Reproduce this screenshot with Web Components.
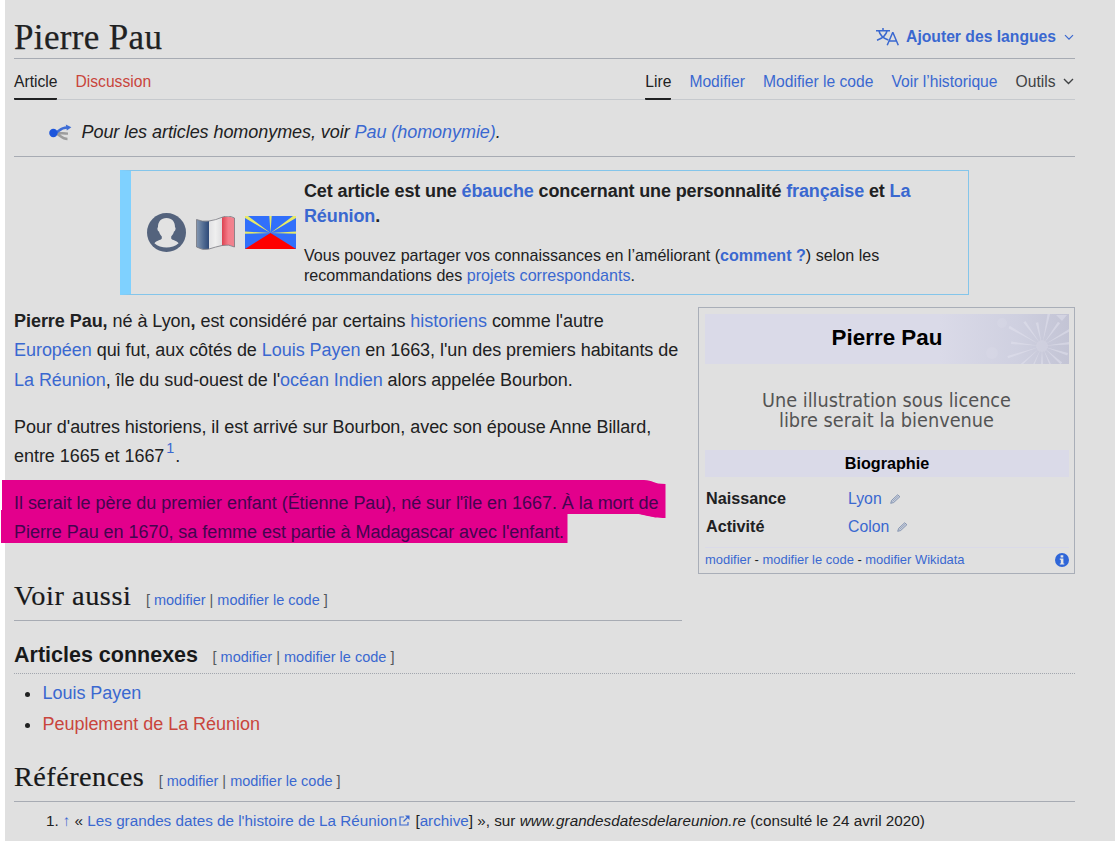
<!DOCTYPE html>
<html lang="fr">
<head>
<meta charset="utf-8">
<title>Pierre Pau</title>
<style>
    html, body
    {
        margin: 0;
        height: 100%;
        overflow: hidden;
        background: #fff;
    }

    body
    {
        font: 18px/29.25px "Liberation Sans", Arial, sans-serif;
        color: #202122;
        --link: #3a68d0;
        --red: #c9453c;
        --rule: #a7abb3;
    }

    a
    {
        color: var(--link);
        text-decoration: none;
    }

    a.new
    {
        color: var(--red);
    }

    p
    {
        margin: 0 0 18px;
        letter-spacing: -0.045px;
        white-space: nowrap;
    }

    sup
    {
        font-size: 14.4px;
        line-height: 0;
        vertical-align: 9px;
        margin: 0 1px 0 2px;
    }
</style>
</head>
<body>

<wk-page>
    <wk-titlebar title="Pierre Pau" langs="Ajouter des langues"></wk-titlebar>

    <wk-tabs>
        <wk-tab selected>Article</wk-tab>
        <wk-tab kind="new">Discussion</wk-tab>
        <wk-tab slot="views" selected>Lire</wk-tab>
        <wk-tab slot="views" kind="link">Modifier</wk-tab>
        <wk-tab slot="views" kind="link">Modifier le code</wk-tab>
        <wk-tab slot="views" kind="link">Voir l’historique</wk-tab>
        <wk-tab slot="views" kind="menu">Outils</wk-tab>
    </wk-tabs>

    <wk-hatnote>Pour les articles homonymes, voir <a>Pau (homonymie)</a>.</wk-hatnote>

    <wk-stub>
        <span slot="title">Cet article est une <a>ébauche</a> concernant une personnalité <a>française</a> et <a>La<br>Réunion</a>.</span>
        Vous pouvez partager vos connaissances en l’améliorant (<a><b>comment ?</b></a>) selon les<br>recommandations des <a>projets correspondants</a>.
    </wk-stub>

    <wk-columns>
        <p><b>Pierre Pau,</b> né à Lyon<b>,</b> est considéré par certains <a>historiens</a> comme l'autre<br>
        <a>Européen</a> qui fut, aux côtés de <a>Louis Payen</a> en 1663, l'un des premiers habitants de<br>
        <a>La Réunion</a>, île du sud-ouest de l'<a>océan Indien</a> alors appelée Bourbon.</p>

        <p>Pour d'autres historiens, il est arrivé sur Bourbon, avec son épouse Anne Billard,<br>
        entre 1665 et 1667<sup><a>1</a></sup>.</p>

        <wk-marked>Il serait le père du premier enfant (Étienne Pau), né sur l'île en 1667. À la mort de<br>
        Pierre Pau en 1670, sa femme est partie à Madagascar avec l'enfant.</wk-marked>

        <wk-heading style="margin-top: 29px">Voir aussi</wk-heading>

        <wk-infobox slot="aside" title="Pierre Pau" section="Biographie">
            <wk-fact label="Naissance">Lyon</wk-fact>
            <wk-fact label="Activité">Colon</wk-fact>
        </wk-infobox>
    </wk-columns>

    <wk-heading level="3">Articles connexes</wk-heading>

    <wk-list>
        <wk-item><a>Louis Payen</a></wk-item>
        <wk-item><a class="new">Peuplement de La Réunion</a></wk-item>
    </wk-list>

    <wk-heading style="margin-top: 16px; letter-spacing: 0.45px">Références</wk-heading>

    <wk-reference number="1." source="www.grandesdatesdelareunion.re" seen="(consulté le 24 avril 2020)">Les grandes dates de l'histoire de La Réunion</wk-reference>
</wk-page>

<script>
const links = `
    a
    {
        color: var(--link);
        text-decoration: none;
    }
`;

class WkElement extends HTMLElement
{
    connectedCallback()
    {
        if (!this.dom)
        {
            this.dom = this.attachShadow({mode: 'open'});
            this.dom.innerHTML = this.render();
        }
    }

    attr(name)
    {
        return this.getAttribute(name) || "";
    }
}

customElements.define("wk-page", class extends WkElement
{
    render()
    {
        return `
            <style>
                :host
                {
                    display: block;
                    box-sizing: border-box;
                    margin-left: 5px;
                    padding: 0 40px 0 9px;
                    height: 841px;
                    background: #e0e0e0;
                }
            </style>
            <slot></slot>`;
    }
});

customElements.define("wk-titlebar", class extends WkElement
{
    render()
    {
        return `
            <style>
                :host
                {
                    display: flex;
                    justify-content: space-between;
                    box-sizing: border-box;
                    height: 59px;
                    padding-top: 17px;
                    border-bottom: 1px solid var(--rule);
                }

                h1
                {
                    margin: 0;
                    font: 35px/42px "Liberation Serif", serif;
                    letter-spacing: 0.35px;
                    -webkit-text-stroke: 0.25px;
                }

                .langs
                {
                    display: flex;
                    align-items: center;
                    height: 40px;
                    font-size: 15.7px;
                    font-weight: bold;
                    color: var(--link);
                }

                .langs svg:first-child
                {
                    margin-right: 7px;
                }

                .langs svg:last-child
                {
                    margin: 0 1px 0 8px;
                }
            </style>
            <h1>${this.attr("title")}</h1>
            <div class="langs">
                <svg width="23" height="18" viewBox="0 0 23 18" fill="none" stroke="currentColor" stroke-width="1.5">
                    <path d="M0 2.7H14M7 0V2.7M3 3C4 7.5 8 10.5 12.4 12M11 3C10 7.5 6 10.5 1 12.2"/>
                    <path d="M11.2 17.2L16.6 4.8H17L22.3 17.2M13 13H20.6"/>
                </svg>
                <span>${this.attr("langs")}</span>
                <svg width="10" height="7" viewBox="0 0 10 7" fill="none" stroke="currentColor" stroke-width="1.2"><path d="M1 1.2L5 5.2L9 1.2"/></svg>
            </div>`;
    }
});

customElements.define("wk-tabs", class extends WkElement
{
    render()
    {
        return `
            <style>
                :host
                {
                    display: flex;
                    justify-content: space-between;
                    box-sizing: border-box;
                    height: 41px;
                    border-bottom: 1px solid #c6c9cd;
                }

                nav
                {
                    display: flex;
                    gap: 18px;
                }
            </style>
            <nav><slot></slot></nav>
            <nav><slot name="views"></slot></nav>`;
    }
});

customElements.define("wk-tab", class extends WkElement
{
    render()
    {
        let arrow = this.attr("kind") == "menu"
            ? `<svg width="11" height="7" viewBox="0 0 11 7" fill="none" stroke="currentColor" stroke-width="1.4"><path d="M1 1L5.5 5.5L10 1"/></svg>`
            : ``;

        return `
            <style>
                :host
                {
                    display: flex;
                    align-items: center;
                    gap: 7px;
                    box-sizing: border-box;
                    height: 41px;
                    padding-bottom: 1px;
                    border-bottom: 2px solid transparent;
                    font-size: 15.65px;
                    white-space: nowrap;
                }

                :host([selected])
                {
                    border-color: #202122;
                    border-radius: 0 0 1px 1px;
                }

                :host([kind=link])
                {
                    color: var(--link);
                }

                :host([kind=new])
                {
                    color: var(--red);
                }

                :host([kind=menu])
                {
                    color: #404244;
                    padding-right: 1.5px;
                }

                span
                {
                    padding-top: 7px;
                }

                svg
                {
                    margin-top: 6px;
                }
            </style>
            <span><slot></slot></span>${arrow}`;
    }
});

customElements.define("wk-hatnote", class extends WkElement
{
    render()
    {
        return `
            <style>
                :host
                {
                    display: flex;
                    align-items: center;
                    gap: 9.5px;
                    box-sizing: border-box;
                    height: 57px;
                    padding: 9px 0 0 35px;
                    border-bottom: 1px solid var(--rule);
                    font-style: italic;
                    letter-spacing: -0.06px;
                    white-space: nowrap;
                }
            </style>
            <svg width="23" height="17" viewBox="0 0 23 17" fill="none">
                <path d="M5 9C10 9 12 15 18.5 15M8 9.3C11 8.6 14 9.6 19 9.6" stroke="#9d9d9d" stroke-width="2.4"/>
                <path d="M5 9C10 9 10 3.5 18 3.5" stroke="#3f6ed6" stroke-width="2.5"/>
                <path d="M16.8 0.4L22.4 3.2L17.8 6.6Z" fill="#3f6ed6"/>
                <circle cx="4.4" cy="9" r="4.2" fill="#1d56dc"/>
            </svg>
            <div><slot></slot></div>`;
    }
});

customElements.define("wk-stub", class extends WkElement
{
    render()
    {
        return `
            <style>
                :host
                {
                    display: flex;
                    align-items: center;
                    box-sizing: border-box;
                    width: 849px;
                    height: 125px;
                    margin: 13px auto 12px;
                    border: 1px solid #84c5ea;
                    border-left: 11px solid #7fd1ff;
                }

                .icons
                {
                    display: flex;
                    align-items: center;
                    padding-left: 16px;
                    gap: 10px;
                    width: 157px;
                }

                .text
                {
                    padding-bottom: 1px;
                    font-size: 16.1px;
                    line-height: 20px;
                    white-space: nowrap;
                }

                .title
                {
                    font-size: 18px;
                    font-weight: bold;
                    letter-spacing: -0.125px;
                    line-height: 25px;
                    margin-bottom: 16px;
                }
            </style>
            <div class="icons">
                <svg width="39" height="39" viewBox="0 0 39 39">
                    <circle cx="19.5" cy="19.5" r="19.5" fill="#54637d"/>
                    <path d="M19.5 5C14 5 10.8 8.8 11 14.2C9.9 14.6 10.4 18 12 18.5C12.6 21 13.8 22.4 14.8 23.4V25.6C13.5 27.5 9.5 27.6 7.4 30.2Q12.5 34.5 19.5 34.5T31.6 30.2C29.5 27.6 25.5 27.5 24.2 25.6V23.4C25.2 22.4 26.4 21 27 18.5C28.6 18 29.1 14.6 28 14.2C28.2 8.8 25 5 19.5 5Z" fill="#e2e2e2"/>
                </svg>
                <svg width="39" height="34" viewBox="0 0 39 34">
                    <defs>
                        <linearGradient id="blue"><stop offset="0" stop-color="#8497b0"/><stop offset=".6" stop-color="#4d6890"/><stop offset="1" stop-color="#2f4a78"/></linearGradient>
                        <linearGradient id="white"><stop offset="0" stop-color="#e2e2e4"/><stop offset=".5" stop-color="#efefef"/><stop offset="1" stop-color="#dedee0"/></linearGradient>
                        <linearGradient id="rouge"><stop offset="0" stop-color="#dc4250"/><stop offset=".5" stop-color="#f57d8a"/><stop offset="1" stop-color="#f0838f"/></linearGradient>
                    </defs>
                    <path d="M0.5 3.5Q6 6 13 5V33Q6 34 0.5 31Z" fill="url(#blue)"/>
                    <path d="M13 5Q19 3 26 1.3V29.5Q19 31 13 33Z" fill="url(#white)"/>
                    <path d="M26 1.3Q32 0 38.5 2V31Q33 28 26 29.5Z" fill="url(#rouge)"/>
                    <path d="M0.5 3.5Q6 6 13 5T26 1.3T38.5 2V31Q33 28 26 29.5T13 33T0.5 31Z" fill="none" stroke="#77777f" stroke-width=".8"/>
                </svg>
                <svg width="51" height="33" viewBox="0 0 51 33">
                    <path d="M0 0H51V33H0Z" fill="#316ffb"/>
                    <path d="M25.5 17L0 2V0H3ZM25.5 17L51 2V0H48ZM25.5 17L24.3 0H26.7ZM25.5 17L0 15.5V17.8ZM25.5 17L51 15.5V17.8Z" fill="#e8ea66"/>
                    <path d="M25.5 17L51 33H0Z" fill="#fe0000"/>
                </svg>
            </div>
            <div class="text">
                <div class="title"><slot name="title"></slot></div>
                <slot></slot>
            </div>`;
    }
});

customElements.define("wk-columns", class extends WkElement
{
    render()
    {
        return `
            <style>
                :host
                {
                    display: grid;
                    grid-template-columns: 668px 377px;
                    column-gap: 16px;
                    align-items: start;
                    height: 314px;
                }
            </style>
            <div><slot></slot></div>
            <slot name="aside"></slot>`;
    }
});

// highlighter stroke lies under the text and runs past the page edge
customElements.define("wk-marked", class extends WkElement
{
    render()
    {
        return `
            <style>
                :host
                {
                    display: block;
                    position: relative;
                    z-index: 0;
                    color: #43054f;
                    line-height: 29px;
                    letter-spacing: -0.04px;
                    white-space: nowrap;
                }

                svg
                {
                    position: absolute;
                    left: -13px;
                    top: -9px;
                    z-index: -1;
                }
            </style>
            <svg width="665" height="64" viewBox="0 0 665 64"><path d="M1 0H643C652 0 652 4 664.5 4V38C648 38 644 34 634 34H566.5V63H0V30H1Z" fill="#e3008c"/></svg>
            <slot></slot>`;
    }
});

customElements.define("wk-heading", class extends WkElement
{
    render()
    {
        return `
            <style>
                ${links}

                :host
                {
                    display: flex;
                    align-items: baseline;
                    box-sizing: border-box;
                    height: 45px;
                    border-bottom: 1px solid var(--rule);
                    color: #18191a;
                    font: 28.3px/39px "Liberation Serif", serif;
                    letter-spacing: 0.55px;
                    -webkit-text-stroke: 0.2px;
                    white-space: nowrap;
                }

                :host([level="3"])
                {
                    height: 53px;
                    padding-top: 13px;
                    border-bottom: 1px dotted #a2a6ae;
                    font: bold 21.5px/42px "Liberation Sans", Arial, sans-serif;
                    letter-spacing: 0;
                    -webkit-text-stroke: 0;
                }

                span
                {
                    margin-left: 14.5px;
                    font: 14.5px "Liberation Sans", Arial, sans-serif;
                    letter-spacing: 0;
                    -webkit-text-stroke: 0;
                    color: #54595d;
                }
            </style>
            <slot></slot>
            <span>[ <a>modifier</a> | <a>modifier le code</a> ]</span>`;
    }
});

customElements.define("wk-infobox", class extends WkElement
{
    render()
    {
        let rays = "";
        let lengths = [34, 29, 36, 28, 27, 26, 29, 22, 36, 38, 36, 31, 38, 30, 24];
        for (let i=0; i<lengths.length; i++)
        {
            rays += `<path d="M0 -3L1.3 -${lengths[i]}H-1.3Z" transform="translate(86 32) rotate(${i*24 + 12})"/>`;
        }

        return `
            <style>
                ${links}

                :host
                {
                    display: block;
                    box-sizing: border-box;
                    height: 267px;
                    padding: 6px 5px 0 6px;
                    border: 1px solid #a9aeb8;
                    font-size: 16.2px;
                    line-height: 20px;
                }

                header
                {
                    display: grid;
                    grid-template-columns: 1fr;
                    height: 50px;
                    background: #dadae8;
                    color: #000;
                }

                header > *
                {
                    grid-area: 1 / 1;
                }

                header svg
                {
                    justify-self: end;
                }

                h2
                {
                    margin: 0;
                    font-size: 22.4px;
                    line-height: 48px;
                    text-align: center;
                }

                .picture
                {
                    display: block;
                    margin: 19px auto 7px;
                    overflow: visible;
                }

                h3
                {
                    margin: 0 0 7px;
                    font-size: 16.2px;
                    line-height: 27px;
                    text-align: center;
                    background: #dadae8;
                    color: #000;
                }

                footer
                {
                    display: flex;
                    align-items: center;
                    justify-content: space-between;
                    margin-top: 7px;
                    padding-top: 1px;
                    border-top: 1px solid #dadae8;
                    font-size: 12.94px;
                    line-height: 22px;
                }
            </style>
            <header>
                <svg width="130" height="50" viewBox="-17 0 130 50">
                    <defs><linearGradient id="fade"><stop offset="0" stop-color="#dadae8"/><stop offset=".6" stop-color="#cfd0e0"/><stop offset="1" stop-color="#c3c4d5"/></linearGradient></defs>
                    <path d="M-17 0H113V50H-17Z" fill="url(#fade)"/>
                    <g fill="#e2e2ee" opacity=".55">${rays}</g>
                    <circle cx="86" cy="32" r="6" fill="#d6d6e4" opacity=".5"/>
                    <g fill="#e2e2ee" opacity=".2"><circle cx="46" cy="9" r="5"/><circle cx="36" cy="39" r="6"/></g>
                    <path d="M100 1H111L106 7Z" fill="#e2e2ee" opacity=".5"/>
                </svg>
                <h2>${this.attr("title")}</h2>
            </header>
            <svg class="picture" width="270" height="60" viewBox="0 0 270 60" font-family="DejaVu Sans, sans-serif" font-size="19.5" fill="#545454">
                <text x="10" y="24" textLength="249" lengthAdjust="spacingAndGlyphs">Une illustration sous licence</text>
                <text x="27" y="44" textLength="215" lengthAdjust="spacingAndGlyphs">libre serait la bienvenue</text>
            </svg>
            <h3>${this.attr("section")}</h3>
            <slot></slot>
            <footer>
                <span><a>modifier</a> - <a>modifier le code</a> - <a>modifier Wikidata</a></span>
                <svg width="14" height="14" viewBox="0 0 14 14">
                    <circle cx="7" cy="7" r="7" fill="#2f66d8"/>
                    <path d="M5.6 2.2H8.3V4.5H5.6ZM4.8 5.6H8.4V10.4H9.3V11.6H4.8V10.4H5.8V6.8H4.8Z" fill="#e6e6e6"/>
                </svg>
            </footer>`;
    }
});

customElements.define("wk-fact", class extends WkElement
{
    render()
    {
        return `
            <style>
                ${links}

                :host
                {
                    display: grid;
                    grid-template-columns: 142px 1fr;
                    height: 28px;
                    padding-left: 1px;
                    line-height: 28px;
                }

                span
                {
                    display: flex;
                    align-items: center;
                    gap: 8px;
                }

                a
                {
                    padding-top: 1px;
                    font-size: 15.8px;
                }
            </style>
            <b>${this.attr("label")}</b>
            <span>
                <a><slot></slot></a>
                <svg width="11" height="10" viewBox="0 0 11 10" fill="none" stroke="#7c8cab">
                    <path d="M0.7 9.3L1.7 6.3L7.6 0.8L9.9 2.7L3.7 8.5Z" fill="#cdd3df" stroke-width=".9"/>
                    <path d="M2.5 7.5L8.3 2.1" stroke-width=".7"/>
                </svg>
            </span>`;
    }
});

customElements.define("wk-list", class extends WkElement
{
    render()
    {
        return `
            <style>
                :host
                {
                    display: grid;
                    grid-auto-rows: 31px;
                    padding: 4px 0 1px;
                }
            </style>
            <slot></slot>`;
    }
});

customElements.define("wk-item", class extends WkElement
{
    render()
    {
        return `
            <style>
                :host
                {
                    display: flex;
                    align-items: center;
                    gap: 12.5px;
                    padding-left: 11px;
                    line-height: 31px;
                    letter-spacing: -0.03px;
                }

                i
                {
                    width: 5px;
                    height: 5px;
                    margin-top: 2px;
                    border-radius: 50%;
                    background: #202122;
                }
            </style>
            <i></i><span><slot></slot></span>`;
    }
});

customElements.define("wk-reference", class extends WkElement
{
    render()
    {
        return `
            <style>
                ${links}

                :host
                {
                    display: flex;
                    gap: 4px;
                    padding: 6px 0 0 32px;
                    font-size: 15.25px;
                    line-height: 25px;
                    white-space: nowrap;
                }

                svg
                {
                    margin: 0 1px 0 2px;
                }
            </style>
            <span>${this.attr("number")}</span>
            <span><a>↑</a> « <a><slot></slot><svg width="11" height="11" viewBox="0 0 11 11" fill="none" stroke="currentColor" stroke-width="1.2"><path d="M5 2H1V10H9V7"/><path d="M4.5 6.5L9 2"/><path d="M6 0.6H10.5V5Z" fill="currentColor" stroke="none"/></svg></a> [<a>archive</a>] », sur <em>${this.attr("source")}</em> ${this.attr("seen")}</span>`;
    }
});
</script>
</body>
</html>
